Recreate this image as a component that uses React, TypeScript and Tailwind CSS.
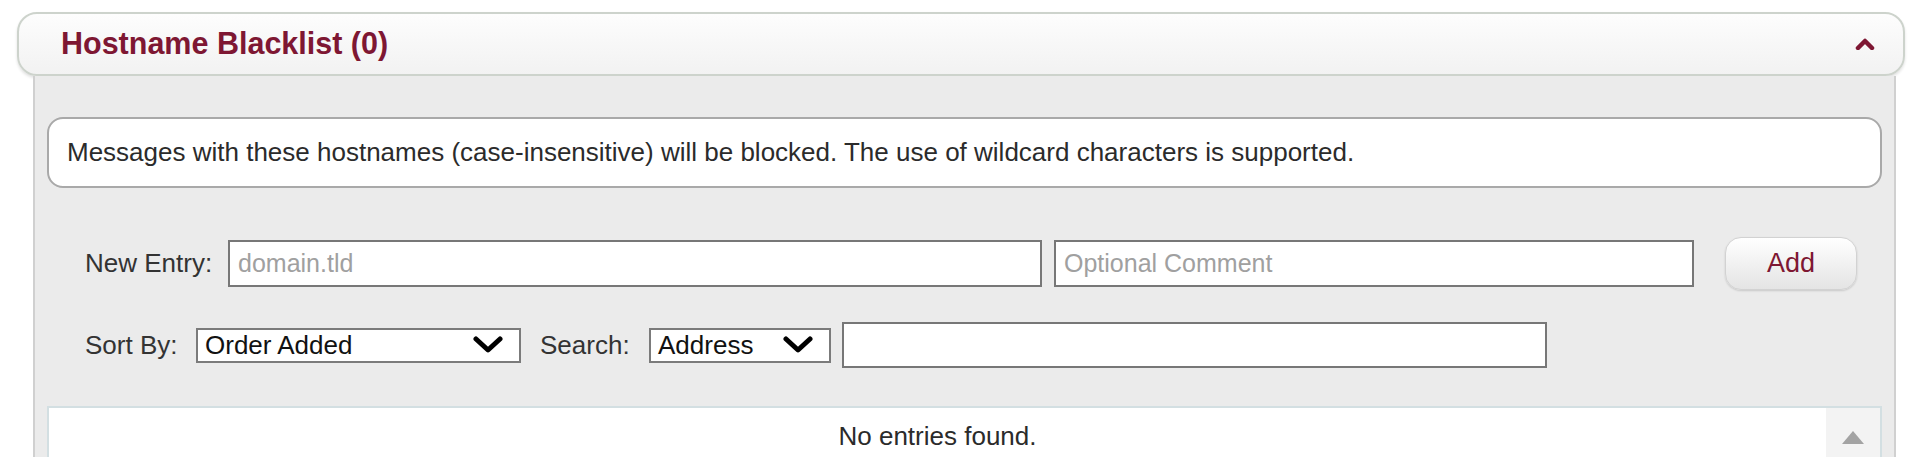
const FONT = { fontFamily: '"Liberation Sans", Arial, Helvetica, sans-serif' }

function Chevron({ className }: { className?: string }) {
  return (
    <svg viewBox="0 0 30 18" className={className} fill="none">
      <path d="M3 3 L15 14 L27 3" stroke="currentColor" strokeWidth="5" strokeLinecap="round" strokeLinejoin="round" />
    </svg>
  )
}

function FakeSelect({ value, width }: { value: string; width: string }) {
  return (
    <div className={`flex h-[35px] items-center justify-between border-2 border-[#7b7b7b] bg-white pl-[7px] pr-[16px] text-[26px] text-[#111] ${width}`}>
      <span className="leading-none">{value}</span>
      <Chevron className="h-[18px] w-[30px] text-black" />
    </div>
  )
}

export default function App() {
  return (
    <div className="h-[457px] overflow-hidden bg-white pl-[17px] pr-[15px] pt-[12px]" style={FONT}>
      {/* section header */}
      <div className="flex h-[64px] items-center justify-between rounded-[20px] border-2 border-[#cdd3cc] bg-gradient-to-b from-[#fdfdfd] to-[#f2f2f2] pl-[42px] pr-[28px] shadow-[0_2px_3px_rgba(0,0,0,0.12)]">
        <h2 className="text-[30.5px] font-bold text-[#7e1733]">Hostname Blacklist (0)</h2>
        <svg viewBox="0 0 20 12" className="h-[12px] w-[20px] text-[#7e1733]" fill="none">
          <path d="M3 10 L10 3 L17 10" stroke="currentColor" strokeWidth="4.5" strokeLinecap="round" strokeLinejoin="round" />
        </svg>
      </div>

      {/* section body */}
      <div className="ml-[16px] mr-[9px] h-[381px] border-x-2 border-[#d0d0d0] bg-[#ebebeb] px-[12px] pt-[41px]">
        <div className="flex h-[71px] items-center rounded-[16px] border-2 border-[#a9a9a9] bg-white pl-[18px] text-[26px] text-[#2b2b2b]">
          Messages with these hostnames (case-insensitive) will be blocked. The use of wildcard characters is supported.
        </div>

        <div className="mt-[49px] flex h-[53px] items-center pl-[38px] text-[26px] text-[#333]">
          <span className="w-[143px]">New Entry:</span>
          <input
            placeholder="domain.tld"
            className="h-[47px] w-[814px] border-2 border-[#777] bg-white px-[8px] text-[25px] outline-none placeholder:text-[#a0a0a0]"
          />
          <input
            placeholder="Optional Comment"
            className="ml-[12px] h-[47px] w-[640px] border-2 border-[#777] bg-white px-[8px] text-[25px] outline-none placeholder:text-[#a0a0a0]"
          />
          <button className="ml-[31px] h-[53px] w-[132px] rounded-[16px] border border-[#d2d2d2] bg-gradient-to-b from-white to-[#e4e4e4] text-[27px] text-[#7e1733] shadow-[0_1px_2px_rgba(0,0,0,0.15)]">
            Add
          </button>
        </div>

        <div className="mt-[32px] flex h-[46px] items-center pl-[38px] text-[26px] text-[#333]">
          <span className="w-[111px]">Sort By:</span>
          <FakeSelect value="Order Added" width="w-[325px]" />
          <span className="ml-[19px] w-[109px]">Search:</span>
          <FakeSelect value="Address" width="w-[182px]" />
          <input className="ml-[11px] h-[46px] w-[705px] border-2 border-[#777] bg-white outline-none" />
        </div>

        <div className="mt-[38px] flex h-[80px] border-2 border-[#d3dfe2] bg-white">
          <div className="flex flex-1 justify-center pt-[13px] text-[26px] leading-[30px] text-[#2b2b2b]">No entries found.</div>
          <div className="flex w-[54px] justify-center bg-[#f3f3f3] pt-[22px]">
            <svg viewBox="0 0 24 15" className="h-[15px] w-[24px]">
              <path d="M12 1 L23 14 L1 14 Z" fill="#a3a3a3" />
            </svg>
          </div>
        </div>
      </div>
    </div>
  )
}
